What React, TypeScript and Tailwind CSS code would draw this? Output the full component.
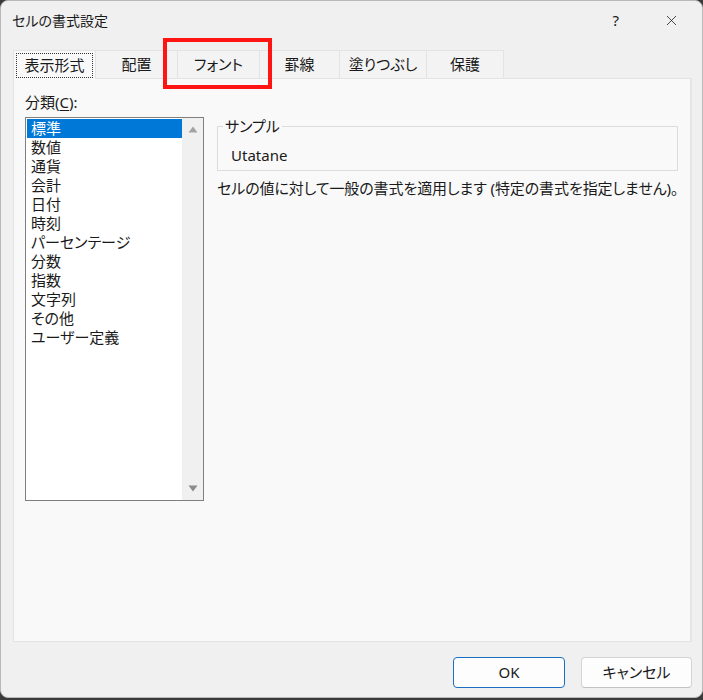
import { X } from 'lucide-react';

const TABS = [
    { label: '表示形式', w: 'w-[83px]', active: true },
    { label: '配置', w: 'w-[82px]' },
    { label: 'フォント', w: 'w-[82px]' },
    { label: '罫線', w: 'w-[80px]' },
    { label: '塗りつぶし', w: 'w-[87px]' },
    { label: '保護', w: 'w-[77px]' },
];

const CATEGORIES = ['標準', '数値', '通貨', '会計', '日付', '時刻', 'パーセンテージ', '分数', '指数', '文字列', 'その他', 'ユーザー定義'];

export default function App() {
    return (
        <div className="w-[703px] h-[700px] bg-[#3a3a3a] font-['Noto_Sans','Noto_Sans_CJK_JP',sans-serif] [font-feature-settings:'palt'] text-[#1a1a1a]">
            <div className="relative w-[703px] h-[698px] rounded-lg border border-[#b9b9b9] bg-[#f0f0f0] flex flex-col overflow-hidden">
                {/* Title bar */}
                <div className="h-[39px] flex items-center pl-[11px] pr-[22px]">
                    <span className="text-[14px] leading-none">セルの書式設定</span>
                    <span className="ml-auto mr-[44px] text-[15px] leading-none">?</span>
                    <X className="h-[17px] w-[17px]" strokeWidth={1.1} />
                </div>

                {/* Tabs */}
                <div className="mt-[10px] flex pl-[12px] h-[28px]">
                    {TABS.map(t => (
                        <div
                            key={t.label}
                            className={`${t.w} h-[28px] flex items-center justify-center text-[15px] border-t border-r border-[#e3e3e3] ${t.active ? 'bg-[#f9f9f9] border-l relative z-10 -mb-px h-[29px]' : 'bg-[#f3f3f3]'}`}
                        >
                            {t.active ? (
                                <span className="px-[7px] h-[25px] flex items-center border border-dotted border-[#333]">{t.label}</span>
                            ) : t.label}
                        </div>
                    ))}
                </div>

                {/* Panel */}
                <div className="ml-[12px] mr-[11px] h-[564px] bg-[#f9f9f9] border border-[#e3e3e3] shadow-[1px_0_0_#e6e6e6] pl-[11px] pr-[11px] pt-[14px] flex gap-[13px]">
                    <div className="flex flex-col">
                        <div className="text-[15px] leading-[18px] h-[24px]">分類(<span className="underline underline-offset-2">C</span>):</div>
                        <div className="w-[179px] h-[384px] border border-[#7f7f7f] bg-white flex">
                            <div className="flex-1 pt-px pl-px">
                                {CATEGORIES.map((c, i) => (
                                    <div key={c} className={`h-[19px] leading-[19px] text-[15px] pl-[4px] ${i === 0 ? 'bg-[#0078d7] text-white' : ''}`}>{c}</div>
                                ))}
                            </div>
                            <div className="w-[21px] bg-[#f0f0f0] flex flex-col items-center justify-between py-[8px]">
                                <svg width="10" height="7" viewBox="0 0 10 7"><path d="M5 0.5L9.5 6.5H0.5Z" fill="#a3a3a3" /></svg>
                                <svg width="10" height="7" viewBox="0 0 10 7"><path d="M5 6.5L9.5 0.5H0.5Z" fill="#8a8a8a" /></svg>
                            </div>
                        </div>
                    </div>

                    <div className="flex-1 pt-[25px]">
                        <fieldset className="w-[461px] h-[53px] border border-[#dcdcdc] pl-[13px] pr-2 m-0">
                            <legend className="ml-[-8px] px-[2px] text-[15px] leading-[16px]">サンプル</legend>
                            <div className="text-[15px] leading-[18px] pt-[12px]">Utatane</div>
                        </fieldset>
                        <p className="mt-[7px] text-[15px] leading-[20px] whitespace-nowrap tracking-[-0.1px]">セルの値に対して一般の書式を適用します (特定の書式を指定しません)。</p>
                    </div>
                </div>

                {/* Buttons */}
                <div className="flex justify-end gap-[16px] pr-[10px] pt-[15px]">
                    <button className="w-[112px] h-[31px] rounded-[4px] border border-[#1a6fc2] bg-[#fdfdfd] text-[15px] leading-none">OK</button>
                    <button className="w-[111px] h-[31px] rounded-[4px] border border-[#d4d4d4] border-b-[#c2c2c2] bg-[#fdfdfd] text-[15px] leading-none">キャンセル</button>
                </div>

                {/* Annotation: red highlight around the font tab */}
                <div className="absolute left-[162px] top-[37px] w-[109px] h-[51px] border-[4px] border-[#ff1414]" />
            </div>
        </div>
    );
}
